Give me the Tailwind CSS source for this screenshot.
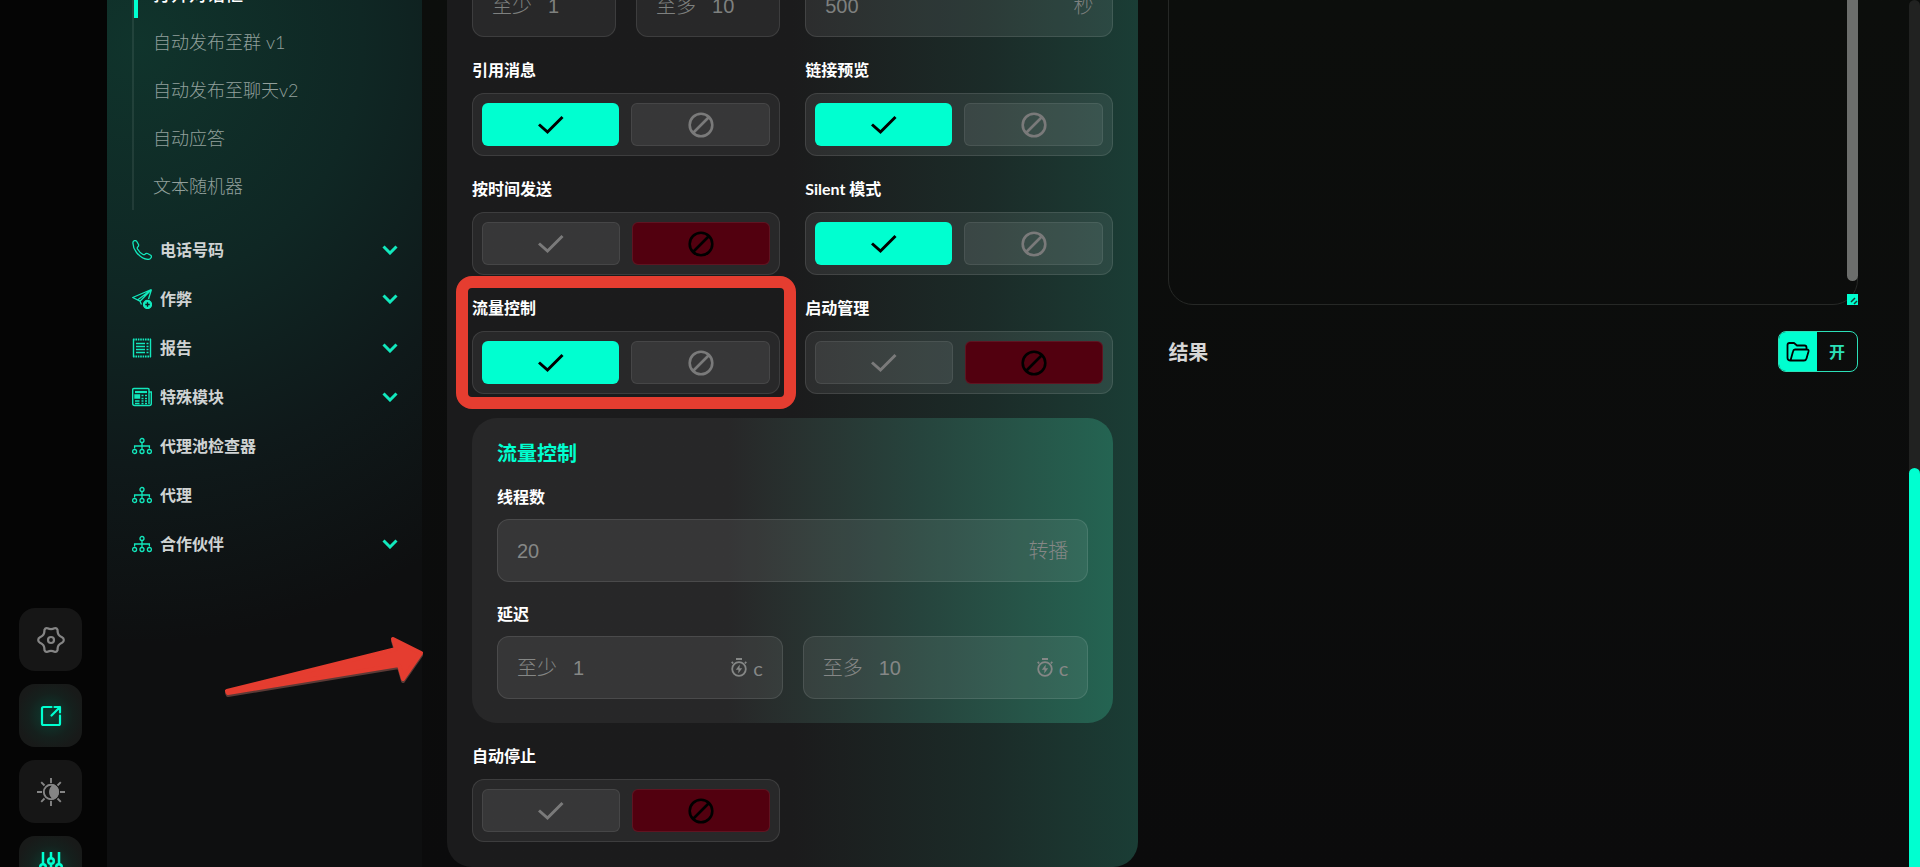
<!DOCTYPE html>
<html lang="zh-CN">
<head>
    <meta charset="UTF-8">
    <meta name="viewport" content="width=device-width, initial-scale=1.0">
    <title>打开对话框</title>
    <script src="https://cdn.jsdelivr.net/npm/@tailwindcss/browser@4"></script>
</head>
<body class="h-screen overflow-hidden bg-[#0b0d0b] font-['Lato','Noto_Sans_CJK_SC',sans-serif] text-white">

<!-- shared icons -->
<svg class="hidden" xmlns="http://www.w3.org/2000/svg">
    <symbol id="check" viewBox="0 0 26 20" fill="none" stroke="currentColor" stroke-width="3">
        <path d="M1 9.500L9.500 17 24.500 2"/>
    </symbol>
    <symbol id="ban" viewBox="0 0 26 26" fill="none" stroke="currentColor" stroke-width="2.600">
        <circle cx="13" cy="13" r="11.300"/>
        <path d="M5 21L21 5"/>
    </symbol>
    <symbol id="chevron" viewBox="0 0 16 10" fill="none" stroke="currentColor" stroke-width="3">
        <path d="M1.500 1.500L8 8l6.500-6.500"/>
    </symbol>
    <symbol id="tree" viewBox="0 0 20 20" fill="none" stroke="currentColor" stroke-width="1.300">
        <circle cx="10" cy="4.500" r="2"/>
        <circle cx="2.600" cy="15.500" r="2"/>
        <circle cx="10" cy="15.500" r="2"/>
        <circle cx="17.400" cy="15.500" r="2"/>
        <path d="M10 6.500V13.500M2.600 12.500V10h14.800V12.500"/>
    </symbol>
    <symbol id="timer" viewBox="0 0 16 20">
        <path d="M5 1h6M2 4L.8 5.200M14 4l1.200 1.200" fill="none" stroke="currentColor" stroke-width="2"/>
        <circle cx="8" cy="11" r="6.800" fill="none" stroke="currentColor" stroke-width="1.800"/>
        <path d="M8.800 6.500L4.800 11.700H7.500L7.200 15.500 11.200 10.300H8.500z" fill="currentColor"/>
    </symbol>
</svg>

<div class="flex h-full">
    <!-- icon rail -->
    <aside class="flex w-[107px] shrink-0 flex-col overflow-hidden bg-[#050505] pl-[19px]">
        <div class="mt-auto -mb-8 flex flex-col gap-[13px]">
            <button type="button" aria-label="设置" class="flex size-[63px] items-center justify-center rounded-2xl bg-[#161616] text-[#858585]">
                <svg class="size-7" viewBox="0 0 28 28" fill="none" stroke="currentColor" stroke-width="2.200" stroke-linejoin="round">
                    <path d="M7.500 3.800Q8.500 1.500 10.500 2.200 14 4 17.500 2.200q2-.7 3 1.600Q20.500 8 22.300 9.500q1 1 2.700 1.700 1.800 1 1.800 2.800t-1.800 2.800q-1.700.7-2.700 1.700Q20.500 20 20.500 24.200q-1 2.300-3 1.600-3.500-1.800-7 0-2 .7-3-1.600Q7.500 20 5.700 18.500q-1-1-2.700-1.700Q1.200 15.800 1.200 14T3 11.200q1.700-.7 2.700-1.700Q7.500 8 7.500 3.800z"/>
                    <circle cx="14" cy="14" r="3"/>
                </svg>
            </button>
            <button type="button" aria-label="打开" class="flex size-[63px] items-center justify-center rounded-2xl bg-[radial-gradient(circle,#0c3d31_0%,#15201d_50%,#181a19_75%)] text-[#00ffd0]">
                <svg class="size-6" viewBox="0 0 24 24" fill="none" stroke="currentColor" stroke-width="2.200" stroke-linecap="round" stroke-linejoin="round">
                    <path d="M12.500 3H4.500Q3 3 3 4.500v15Q3 21 4.500 21h15q1.500 0 1.500-1.500V11.500M12.500 11.500L21 3M15.500 3H21V8.500"/>
                </svg>
            </button>
            <button type="button" aria-label="主题" class="flex size-[63px] items-center justify-center rounded-2xl bg-[#161616] text-[#858585]">
                <svg class="size-7" viewBox="0 0 28 28" fill="none" stroke="currentColor" stroke-width="1.900">
                    <circle cx="14" cy="14" r="7.200"/>
                    <path d="M16.500 7.500a7 7 0 0 1 0 13Q13 18 13 14t3.500-6.500z" fill="currentColor"/>
                    <path d="M14 0v5M14 23v5M0 14h5M23 14h5M4.200 4.200l3.300 3.300M20.500 20.500l3.300 3.300M4.200 23.800l3.300-3.300M20.500 7.500l3.300-3.300"/>
                </svg>
            </button>
            <button type="button" aria-label="筛选" class="flex size-[63px] items-start justify-center rounded-2xl bg-[radial-gradient(circle,#0c3d31_0%,#15201d_50%,#181a19_75%)] pt-4 text-[#00ffd0]">
                <svg class="size-7" viewBox="0 0 28 28" fill="none" stroke="currentColor" stroke-width="2.500">
                    <path d="M6 0v12M6 18v9M14 0v6M14 12v15M22 0v12M22 18v9"/>
                    <circle cx="6" cy="15" r="2.800"/>
                    <circle cx="14" cy="9" r="2.800"/>
                    <circle cx="22" cy="15" r="2.800"/>
                </svg>
            </button>
        </div>
    </aside>

    <!-- sidebar -->
    <nav class="w-[315px] shrink-0 overflow-hidden bg-[#0e0f10] bg-[radial-gradient(ellipse_560px_600px_at_10%_5%,#10342c_0%,#0f2724_40%,#0f191a_70%,#0e0f10_100%)] pl-[25px]">
        <ul class="-mt-[30px] border-l-2 border-white/8 text-lg font-light text-[#92a09c]">
            <li class="border-l-4 border-[#00ffd0]"><a href="#" class="flex h-12 items-center pl-[15px] font-medium text-white">打开对话框</a></li>
            <li><a href="#" class="flex h-12 items-center pl-[19px]">自动发布至群 v1</a></li>
            <li><a href="#" class="flex h-12 items-center pl-[19px]">自动发布至聊天v2</a></li>
            <li><a href="#" class="flex h-12 items-center pl-[19px]">自动应答</a></li>
            <li><a href="#" class="flex h-12 items-center pl-[19px]">文本随机器</a></li>
        </ul>
        <ul class="mt-[15px] pr-6 font-bold text-[#cfd3d3]">
            <li><a href="#" class="flex h-[49px] items-center gap-2">
                <svg class="size-5 text-[#12e8bd]" viewBox="0 0 20 20" fill="none" stroke="currentColor" stroke-width="1.300">
                    <path d="M1 3.500Q.5 1.500 2.500.7 4 .2 4.800 1.500l1.700 3q.5 1.500-.8 2.500-.8.700-.2 2 2.200 3.800 5.500 5.500 1.200.5 2-.3 1-1.200 2.500-.7l3.200 1.800q1.200 1 .5 2.200-1 2-3.200 1.900Q10 19 4.500 12.500 1 8 1 3.500z"/>
                </svg>
                <span class="flex-1">电话号码</span>
                <svg class="h-[10px] w-4 text-[#12e8bd]"><use href="#chevron"/></svg>
            </a></li>
            <li><a href="#" class="flex h-[49px] items-center gap-2">
                <svg class="size-5 text-[#12e8bd]" viewBox="0 0 20 20" fill="none" stroke="currentColor" stroke-width="1.300" stroke-linejoin="round">
                    <path d="M19.500.5L.7 8.500 8 12.200l1.500 3.300M19.500.5L5.500 11M19.500.5L8 12.200M19.500.5L16.500 10"/>
                    <circle cx="15.500" cy="15.500" r="4" fill="currentColor"/>
                    <path d="M15.500 13.300v4.400M13.300 15.500h4.400" stroke="#0e1a1a" stroke-width="1.300"/>
                </svg>
                <span class="flex-1">作弊</span>
                <svg class="h-[10px] w-4 text-[#12e8bd]"><use href="#chevron"/></svg>
            </a></li>
            <li><a href="#" class="flex h-[49px] items-center gap-2">
                <svg class="size-5 text-[#12e8bd]" viewBox="0 0 20 20" fill="none" stroke="currentColor" stroke-width="1.400">
                    <path d="M1.500 1v18M18.500 1v18"/>
                    <path d="M1 1.500h18M1 18.500h18" stroke-width="2" stroke-dasharray="1.600 .8"/>
                    <path d="M4 5.500h9M4 8.500h9M4 11.500h9M4 14.500h9M14.500 5.500h2M14.500 8.500h2M14.500 11.500h2M14.500 14.500h2"/>
                </svg>
                <span class="flex-1">报告</span>
                <svg class="h-[10px] w-4 text-[#12e8bd]"><use href="#chevron"/></svg>
            </a></li>
            <li><a href="#" class="flex h-[49px] items-center gap-2">
                <svg class="size-5 text-[#12e8bd]" viewBox="0 0 20 20" fill="none" stroke="currentColor" stroke-width="1.400">
                    <path d="M17 17V2.500Q17 1.500 16 1.500H1.800Q.7 1.500.7 2.500v14q0 2 2 2h14.600q2 0 2-2V5H17"/>
                    <path d="M3 5h12" stroke-width="2.200"/>
                    <path d="M3 8h4.500v3H3z" fill="currentColor"/>
                    <path d="M9.500 8.500h2M13 8.500h2M9.500 11.500h2M13 11.500h2M3 14h4.500M9.500 14h2M13 14h2M3 16.500h4.500M9.500 16.500h2M13 16.500h2"/>
                </svg>
                <span class="flex-1">特殊模块</span>
                <svg class="h-[10px] w-4 text-[#12e8bd]"><use href="#chevron"/></svg>
            </a></li>
            <li><a href="#" class="flex h-[49px] items-center gap-2">
                <svg class="size-5 text-[#12e8bd]"><use href="#tree"/></svg>
                <span class="flex-1">代理池检查器</span>
            </a></li>
            <li><a href="#" class="flex h-[49px] items-center gap-2">
                <svg class="size-5 text-[#12e8bd]"><use href="#tree"/></svg>
                <span class="flex-1">代理</span>
            </a></li>
            <li><a href="#" class="flex h-[49px] items-center gap-2">
                <svg class="size-5 text-[#12e8bd]"><use href="#tree"/></svg>
                <span class="flex-1">合作伙伴</span>
                <svg class="h-[10px] w-4 text-[#12e8bd]"><use href="#chevron"/></svg>
            </a></li>
        </ul>
    </nav>

    <main class="flex flex-1 gap-[30px] overflow-hidden bg-linear-to-b from-[#0c0e0c] to-[#0b0b0c] pr-[51px] pl-[25px]">
        <!-- settings card -->
        <form class="-mt-[26px] w-[49%] self-start rounded-b-[25px] bg-linear-to-r from-[#1b1b1c] from-50% via-[#1b2b28] via-78% to-[#1a3d35] px-[25px] pb-[25px]">
            <div class="grid grid-cols-2 gap-x-[25px] gap-y-[21px]">
                <div class="grid grid-cols-2 gap-5">
                    <label class="flex h-[63px] items-center gap-4 rounded-xl border border-white/10 bg-white/6 px-[19px] font-['Liberation_Sans','Noto_Sans_CJK_SC',sans-serif] text-xl font-light text-[#7e807f]">
                        <span class="shrink-0">至少</span>
                        <input type="text" value="1" class="w-full min-w-0 outline-none">
                    </label>
                    <label class="flex h-[63px] items-center gap-4 rounded-xl border border-white/10 bg-white/6 px-[19px] font-['Liberation_Sans','Noto_Sans_CJK_SC',sans-serif] text-xl font-light text-[#7e807f]">
                        <span class="shrink-0">至多</span>
                        <input type="text" value="10" class="w-full min-w-0 outline-none">
                    </label>
                </div>
                <label class="flex h-[63px] items-center rounded-xl border border-white/10 bg-white/8 px-[19px] font-['Liberation_Sans','Noto_Sans_CJK_SC',sans-serif] text-xl font-light text-[#7e807f]">
                    <input type="text" value="500" class="w-full min-w-0 outline-none">
                    <span class="shrink-0">秒</span>
                </label>

                <div role="group" aria-labelledby="quote">
                    <h3 id="quote" class="mb-[11px] leading-6 font-bold">引用消息</h3>
                    <div class="flex h-[63px] gap-3 rounded-xl border border-white/10 bg-white/6 p-[9px]">
                        <button type="button" aria-label="是" class="flex flex-1 items-center justify-center rounded-md bg-[#00ffd0] text-black"><svg class="h-5 w-[26px]"><use href="#check"/></svg></button>
                        <button type="button" aria-label="否" class="flex flex-1 items-center justify-center rounded-md border border-white/8 bg-white/7 text-[#7a7a7a]"><svg class="size-[26px]"><use href="#ban"/></svg></button>
                    </div>
                </div>
                <div role="group" aria-labelledby="preview">
                    <h3 id="preview" class="mb-[11px] leading-6 font-bold">链接预览</h3>
                    <div class="flex h-[63px] gap-3 rounded-xl border border-white/10 bg-white/8 p-[9px]">
                        <button type="button" aria-label="是" class="flex flex-1 items-center justify-center rounded-md bg-[#00ffd0] text-black"><svg class="h-5 w-[26px]"><use href="#check"/></svg></button>
                        <button type="button" aria-label="否" class="flex flex-1 items-center justify-center rounded-md border border-white/8 bg-white/7 text-[#7a7a7a]"><svg class="size-[26px]"><use href="#ban"/></svg></button>
                    </div>
                </div>

                <div role="group" aria-labelledby="schedule">
                    <h3 id="schedule" class="mb-[11px] leading-6 font-bold">按时间发送</h3>
                    <div class="flex h-[63px] gap-3 rounded-xl border border-white/10 bg-white/6 p-[9px]">
                        <button type="button" aria-label="是" class="flex flex-1 items-center justify-center rounded-md border border-white/8 bg-white/7 text-[#7a7a7a]"><svg class="h-5 w-[26px]"><use href="#check"/></svg></button>
                        <button type="button" aria-label="否" class="flex flex-1 items-center justify-center rounded-md border border-white/8 bg-[#52000f] text-black"><svg class="size-[26px]"><use href="#ban"/></svg></button>
                    </div>
                </div>
                <div role="group" aria-labelledby="silent">
                    <h3 id="silent" class="mb-[11px] leading-6 font-bold">Silent 模式</h3>
                    <div class="flex h-[63px] gap-3 rounded-xl border border-white/10 bg-white/8 p-[9px]">
                        <button type="button" aria-label="是" class="flex flex-1 items-center justify-center rounded-md bg-[#00ffd0] text-black"><svg class="h-5 w-[26px]"><use href="#check"/></svg></button>
                        <button type="button" aria-label="否" class="flex flex-1 items-center justify-center rounded-md border border-white/8 bg-white/7 text-[#7a7a7a]"><svg class="size-[26px]"><use href="#ban"/></svg></button>
                    </div>
                </div>

                <div role="group" aria-labelledby="flow" class="relative">
                    <h3 id="flow" class="mb-[11px] leading-6 font-bold">流量控制</h3>
                    <div class="flex h-[63px] gap-3 rounded-xl border border-white/10 bg-white/6 p-[9px]">
                        <button type="button" aria-label="是" class="flex flex-1 items-center justify-center rounded-md bg-[#00ffd0] text-black"><svg class="h-5 w-[26px]"><use href="#check"/></svg></button>
                        <button type="button" aria-label="否" class="flex flex-1 items-center justify-center rounded-md border border-white/8 bg-white/7 text-[#7a7a7a]"><svg class="size-[26px]"><use href="#ban"/></svg></button>
                    </div>
                    <!-- highlight frame -->
                    <div class="pointer-events-none absolute -inset-x-4 -top-5 -bottom-[15px] rounded-2xl border-12 border-[#e53d30]"></div>
                </div>
                <div role="group" aria-labelledby="launch">
                    <h3 id="launch" class="mb-[11px] leading-6 font-bold">启动管理</h3>
                    <div class="flex h-[63px] gap-3 rounded-xl border border-white/10 bg-white/8 p-[9px]">
                        <button type="button" aria-label="是" class="flex flex-1 items-center justify-center rounded-md border border-white/8 bg-white/7 text-[#7a7a7a]"><svg class="h-5 w-[26px]"><use href="#check"/></svg></button>
                        <button type="button" aria-label="否" class="flex flex-1 items-center justify-center rounded-md border border-white/8 bg-[#52000f] text-black"><svg class="size-[26px]"><use href="#ban"/></svg></button>
                    </div>
                </div>
            </div>

            <section class="mt-6 mb-[21px] rounded-[25px] bg-linear-to-r from-[#272728] from-40% via-[#26443d] via-70% to-[#246452] px-[25px] pt-[23px] pb-6">
                <h2 class="mb-5 text-xl leading-6 font-bold text-[#00ffd0]">流量控制</h2>
                <label for="threads" class="mb-[10px] block leading-6 font-bold">线程数</label>
                <div class="mb-5 flex h-[63px] items-center rounded-xl border border-white/10 bg-white/7 px-[19px] font-['Liberation_Sans','Noto_Sans_CJK_SC',sans-serif] text-xl font-light text-[#858786]">
                    <input id="threads" type="text" value="20" class="w-full min-w-0 outline-none">
                    <span class="shrink-0">转播</span>
                </div>
                <h3 class="mb-[10px] leading-6 font-bold">延迟</h3>
                <div class="grid grid-cols-2 gap-5">
                    <label class="flex h-[63px] items-center gap-4 rounded-xl border border-white/10 bg-white/7 px-[19px] font-['Liberation_Sans','Noto_Sans_CJK_SC',sans-serif] text-xl font-light text-[#858786]">
                        <span class="shrink-0">至少</span>
                        <input type="text" value="1" class="w-full min-w-0 outline-none">
                        <span class="flex shrink-0 items-center gap-[6px] font-['Lato',sans-serif] font-normal"><svg class="h-5 w-4"><use href="#timer"/></svg>c</span>
                    </label>
                    <label class="flex h-[63px] items-center gap-4 rounded-xl border border-white/10 bg-white/7 px-[19px] font-['Liberation_Sans','Noto_Sans_CJK_SC',sans-serif] text-xl font-light text-[#858786]">
                        <span class="shrink-0">至多</span>
                        <input type="text" value="10" class="w-full min-w-0 outline-none">
                        <span class="flex shrink-0 items-center gap-[6px] font-['Lato',sans-serif] font-normal"><svg class="h-5 w-4"><use href="#timer"/></svg>c</span>
                    </label>
                </div>
            </section>

            <div class="grid grid-cols-2 gap-[25px]">
                <div role="group" aria-labelledby="autostop">
                    <h3 id="autostop" class="mb-[11px] leading-6 font-bold">自动停止</h3>
                    <div class="flex h-[63px] gap-3 rounded-xl border border-white/10 bg-white/6 p-[9px]">
                        <button type="button" aria-label="是" class="flex flex-1 items-center justify-center rounded-md border border-white/8 bg-white/7 text-[#7a7a7a]"><svg class="h-5 w-[26px]"><use href="#check"/></svg></button>
                        <button type="button" aria-label="否" class="flex flex-1 items-center justify-center rounded-md border border-white/8 bg-[#52000f] text-black"><svg class="size-[26px]"><use href="#ban"/></svg></button>
                    </div>
                </div>
            </div>
        </form>

        <!-- log and result -->
        <section class="min-w-0 flex-1">
            <div class="relative -mt-10">
                <textarea aria-label="日志" class="block h-[345px] w-full resize-none rounded-[25px] border border-[#262826] p-5 outline-none"></textarea>
                <span class="absolute top-0 right-0 h-[321px] w-[11px] rounded-b-full bg-[#6c6e6c]"></span>
                <svg class="absolute right-0 bottom-0 size-[11px] bg-[#00ffd0]" viewBox="0 0 11 11" stroke="#143c32" stroke-width="1.500"><path d="M4 8l4-4M7 10l3-3"/></svg>
            </div>
            <div class="mt-[26px] flex items-center justify-between">
                <h2 class="text-xl font-bold text-[#d6d6d6]">结果</h2>
                <button type="button" class="flex h-[41px] w-20 overflow-hidden rounded-lg border border-[#2ce0b8] font-bold text-[#2ce0b8]">
                    <span class="flex h-full w-[38px] items-center justify-center bg-[#00ffd0] text-black">
                        <svg class="size-6" viewBox="0 0 24 24" fill="none" stroke="currentColor" stroke-width="1.800" stroke-linejoin="round">
                            <path d="M4.500 20.500Q1.500 20.500 1.500 18V5Q1.500 3 3.500 3H8l3 2.500h7.500q2 0 2 2V9M4.500 20.500L7 11.500Q7.500 9.500 9 9.500h12q2 0 1.500 2l-2 7q-.5 2-2.500 2z"/>
                        </svg>
                    </span>
                    <span class="flex h-full flex-1 items-center justify-center">开</span>
                </button>
            </div>
        </section>
    </main>

    <!-- page scrollbar -->
    <div class="flex w-[11px] shrink-0 flex-col justify-end rounded-t-full bg-[#212221]">
        <div class="h-[46%] rounded-t-full bg-[#00ffd0]"></div>
    </div>
</div>

<!-- pointer arrow -->
<svg class="pointer-events-none absolute top-[630px] left-[220px] h-[70px] w-[210px] drop-shadow-[0_2px_0_#5b3a36]" viewBox="0 0 210 70">
    <path d="M7 61L176 19 173 9 201 23 183 49 179 35 8 63z" fill="#e53d30" stroke="#e53d30" stroke-width="4" stroke-linejoin="round"/>
</svg>
</body>
</html>
